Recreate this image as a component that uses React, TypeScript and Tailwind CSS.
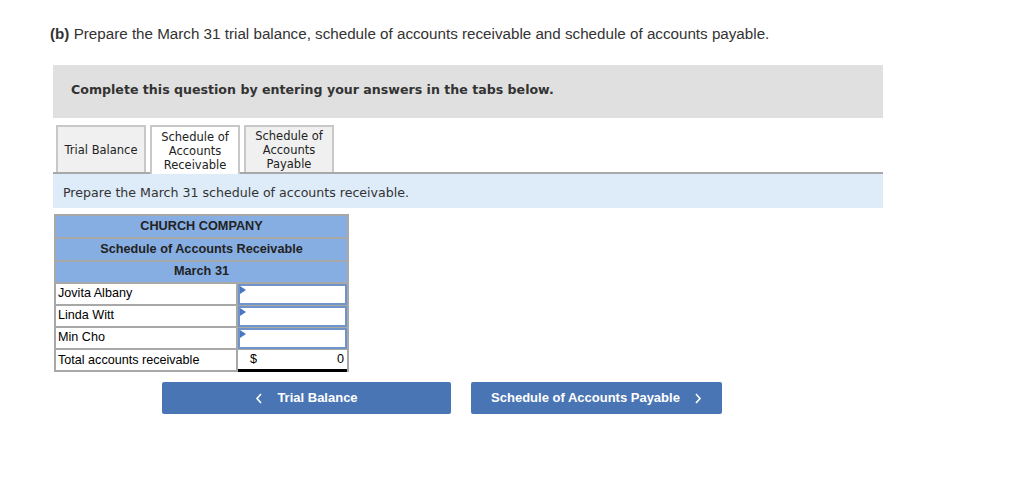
import React from "react";

const verdana = { fontFamily: '"DejaVu Sans", Verdana, sans-serif' };
const arial = { fontFamily: '"Liberation Sans", Arial, sans-serif' };

function InputCell() {
  return (
    <div className="relative h-full w-full border-2 border-[#6f94c9] bg-white">
      <span className="absolute left-0 top-0 h-0 w-0 border-y-[4px] border-l-[6px] border-y-transparent border-l-[#4a78c0]" />
    </div>
  );
}

function Row({ label, children }: { label: string; children: React.ReactNode }) {
  return (
    <div className="grid h-[22px] grid-cols-[182px_1fr] border-b-2 border-[#a8a8a8]">
      <div className="flex items-center border-r-2 border-[#a8a8a8] pb-[2px] pl-[2px] text-[12.6px] text-black">{label}</div>
      <div className="h-full">{children}</div>
    </div>
  );
}

export default function App() {
  return (
    <div className="h-[496px] w-[1024px] bg-white text-[#222]">
      <div className="px-[50px] pt-[24px]">
        <p className="text-[15.2px] leading-5 text-[#333]" style={arial}>
          <span className="font-bold">(b)</span> Prepare the March 31 trial balance, schedule of accounts receivable and schedule of accounts payable.
        </p>
      </div>

      <div className="ml-[53px] mt-[21px] w-[830px]">
        <div className="h-[53px] bg-[#e0e0e0] pl-[18px] pt-[12px]" style={verdana}>
          <span className="text-[12.6px] font-bold text-[#333]">Complete this question by entering your answers in the tabs below.</span>
        </div>

        <div className="mt-[7px] flex items-end gap-[4px] pl-[3px] text-[11.5px] leading-[14px] text-[#222]" style={verdana}>
          <div className="flex h-[47px] w-[90px] items-center justify-center border-2 border-b-0 border-[#c8c8c8] bg-[#f0f0f0] text-center">
            Trial Balance
          </div>
          <div className="relative -mb-[2px] flex h-[49px] w-[90px] items-center justify-center border-2 border-b-0 border-[#c8c8c8] bg-white text-center">
            Schedule of<br />Accounts<br />Receivable
          </div>
          <div className="flex h-[47px] w-[90px] items-center justify-center border-2 border-b-0 border-[#c8c8c8] bg-[#f0f0f0] text-center">
            Schedule of<br />Accounts<br />Payable
          </div>
        </div>

        <div className="flex h-[36px] items-center border-t-2 border-[#a8a8a8] bg-[#deebf8] pl-[10px] pt-[4px] text-[12.6px] text-[#333]" style={verdana}>
          Prepare the March 31 schedule of accounts receivable.
        </div>

        <div className="ml-[1px] mt-[6px] w-[295px] border-2 border-b-0 border-[#a8a8a8]" style={arial}>
          <div className="flex h-[23px] items-center justify-center border-b-2 border-[#a8a8a8] bg-[#86aee2] text-[12.7px] font-bold text-[#222]">
            CHURCH COMPANY
          </div>
          <div className="flex h-[23px] items-center justify-center border-b-2 border-[#a8a8a8] bg-[#86aee2] text-[12.7px] font-bold text-[#222]">
            Schedule of Accounts Receivable
          </div>
          <div className="flex h-[22px] items-center justify-center border-b-2 border-[#a8a8a8] bg-[#86aee2] text-[12.7px] font-bold text-[#222]">
            March 31
          </div>
          <Row label="Jovita Albany"><InputCell /></Row>
          <Row label="Linda Witt"><InputCell /></Row>
          <Row label="Min Cho"><InputCell /></Row>
          <Row label="Total accounts receivable">
            <div className="flex h-full items-center justify-between border-b-[3px] border-black px-[12px] pr-[3px] text-[12.6px] text-black">
              <span>$</span>
              <span>0</span>
            </div>
          </Row>
        </div>

        <div className="mt-[10px] flex gap-[20px] pl-[109px]" style={arial}>
          <button className="flex h-[32px] w-[289px] items-center justify-center gap-[14px] rounded-[2px] bg-[#4a75b5] text-[13px] font-bold text-white">
            <svg width="8" height="11" viewBox="0 0 8 11" fill="none" stroke="white" strokeWidth="1.6"><path d="M6 1 L2 5.5 L6 10" /></svg>
            <span>Trial Balance</span>
          </button>
          <button className="flex h-[32px] w-[251px] items-center justify-center gap-[14px] rounded-[2px] bg-[#4a75b5] text-[13px] font-bold text-white">
            <span>Schedule of Accounts Payable</span>
            <svg width="8" height="11" viewBox="0 0 8 11" fill="none" stroke="white" strokeWidth="1.6"><path d="M2 1 L6 5.5 L2 10" /></svg>
          </button>
        </div>
      </div>
    </div>
  );
}
